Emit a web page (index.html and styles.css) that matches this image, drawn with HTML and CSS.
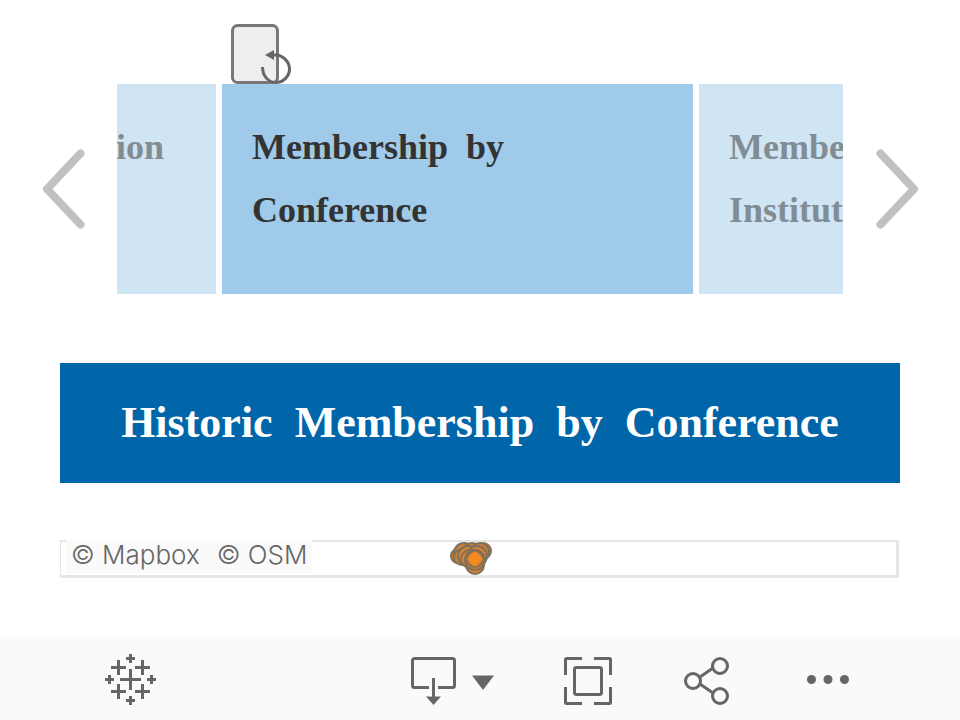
FILE: index.html
```html
<!DOCTYPE html>
<html lang="en">
<head>
  <meta charset="UTF-8">
  <meta name="viewport" content="width=device-width, initial-scale=1">
  <title>Historic Membership by Conference</title>
  <link rel="stylesheet" href="styles.css">
</head>
<body>
  <main class="story">
    <nav class="navigator" aria-label="Story points">
      <button class="arrow" type="button" aria-label="Previous">
        <svg width="54" height="84" viewBox="0 0 54 84" fill="none"><path d="M48.500 6.500L15 42L48.500 77.500"/></svg>
      </button>
      <div class="points">
        <button class="point point-prev" type="button">ion</button>
        <div class="current">
          <button class="point point-active" type="button">Membership  by
Conference</button>
          <button class="revert" type="button" aria-label="Revert">
            <svg width="62" height="60" viewBox="0 0 62 60" fill="none">
              <rect x="2.500" y="1.500" width="45" height="57" rx="5" fill="#eee" stroke="#777" stroke-width="3"/>
              <path d="M32.500 43c0 9 6 15.500 13.500 15.500S59.500 52 59.500 45S53 31 45.500 31H42" stroke="#666" stroke-width="3"/>
              <path d="M35 31l9-5v10z" fill="#666"/>
            </svg>
          </button>
        </div>
        <button class="point point-next" type="button">Membership  by
Institution</button>
      </div>
      <button class="arrow" type="button" aria-label="Next">
        <svg width="54" height="84" viewBox="0 0 54 84" fill="none"><path d="M5.500 6.500L39 42L5.500 77.500"/></svg>
      </button>
    </nav>

    <h1 class="title">Historic  Membership  by  Conference</h1>

    <section class="map" aria-label="Map">
      <div class="attribution"><a href="#mapbox">© Mapbox</a><a href="#osm">© OSM</a></div>
      <svg class="marks" width="46" height="34" viewBox="0 0 46 34">
        <g fill="#d9822f" stroke="#80705a" stroke-width="2">
          <circle cx="36" cy="10" r="8"/>
          <circle cx="11" cy="15" r="7"/>
          <circle cx="17" cy="12" r="10"/>
          <circle cx="25" cy="11" r="9"/>
          <circle cx="33" cy="11" r="9"/>
          <circle cx="15" cy="16" r="8"/>
          <circle cx="21" cy="15" r="10"/>
          <circle cx="30" cy="15" r="10"/>
          <circle cx="23" cy="18" r="9"/>
          <circle cx="28" cy="24" r="9"/>
          <circle cx="28" cy="19" r="10"/>
          <circle cx="28" cy="18" r="8"/>
        </g>
        <path d="M28 10l8 8l-8 8l-8-8z" fill="#f58a22"/>
      </svg>
    </section>
  </main>

  <footer class="toolbar">
    <a class="tool" href="#tableau" aria-label="View on Tableau Public">
      <svg width="51" height="51" viewBox="0 0 51 51" stroke="#666" stroke-width="3" fill="none">
        <path d="M25.500 15v21M15 25.500h21"/>
        <path d="M13.500 6v15M6 13.500h15M37.500 6v15M30 13.500h15M13.500 30v15M6 37.500h15M37.500 30v15M30 37.500h15"/>
        <path d="M25.500 0v9M21 4.500h9M25.500 42v9M21 46.500h9M4.500 21v9M0 25.500h9M46.500 21v9M42 25.500h9"/>
      </svg>
    </a>
    <button class="tool tool-download" type="button" aria-label="Download">
      <svg width="84" height="54" viewBox="0 -4 84 54" fill="none">
        <path d="M18 30.500H3.500a2 2 0 0 1-2-2v-25a2 2 0 0 1 2-2h38a2 2 0 0 1 2 2v25a2 2 0 0 1-2 2H27M22.500 21v20" stroke="#666" stroke-width="3"/>
        <path d="M15 39.500h15L22.500 48z" fill="#666"/>
        <path d="M61 18.500h22L72 33z" fill="#666"/>
      </svg>
    </button>
    <button class="tool" type="button" aria-label="Full screen">
      <svg width="48" height="51" viewBox="0 -3 48 51" fill="none" stroke="#666" stroke-width="3">
        <path d="M1.500 18V2.500a1 1 0 0 1 1-1H18M30 1.500h15.500a1 1 0 0 1 1 1V18M46.500 30v15.500a1 1 0 0 1-1 1H30M18 46.500H2.500a1 1 0 0 1-1-1V30"/>
        <rect x="10.500" y="10.500" width="27" height="27" rx="2"/>
      </svg>
    </button>
    <button class="tool" type="button" aria-label="Share">
      <svg width="48" height="51" viewBox="0 -3 48 51" fill="none" stroke="#666" stroke-width="3">
        <circle cx="9" cy="24" r="7.500"/>
        <circle cx="36" cy="9" r="7.500"/>
        <circle cx="36" cy="39" r="7.500"/>
        <path d="M16 20l13-9M16 27l13 9"/>
      </svg>
    </button>
    <button class="tool" type="button" aria-label="More">
      <svg width="42" height="9" viewBox="0 0 42 9" fill="#666">
        <circle cx="4.500" cy="4.500" r="4.500"/>
        <circle cx="21" cy="4.500" r="4.500"/>
        <circle cx="37.500" cy="4.500" r="4.500"/>
      </svg>
    </button>
  </footer>
</body>
</html>
```
FILE: styles.css
```css
* {
  box-sizing: border-box;
}

body {
  margin: 0;
  min-height: 100vh;
  display: flex;
  flex-direction: column;
  background: #fff;
  font-family: "Liberation Serif", "Times New Roman", serif;
}

button {
  margin: 0;
  padding: 0;
  border: none;
  background: none;
  font: inherit;
  cursor: pointer;
}

svg {
  display: block;
}

.story {
  flex: 1;
  padding-top: 84px;
}

/* Story navigator */
.navigator {
  display: flex;
  align-items: stretch;
  height: 210px;
}

.arrow {
  flex: 0 0 117px;
  display: flex;
  align-items: center;
  justify-content: center;
}

.arrow path {
  stroke: #c1c1c1;
  stroke-width: 8;
  stroke-linecap: round;
  stroke-linejoin: round;
}

.points {
  flex: 1;
  min-width: 0;
  display: flex;
  gap: 6px;
}

.point {
  display: flex;
  align-items: flex-start;
  padding: 32px 30px;
  overflow: hidden;
  background: #cfe5f3;
  color: #828c93;
  font-size: 36px;
  font-weight: bold;
  line-height: 63px;
  text-align: left;
  white-space: pre;
}

.point-prev {
  flex: 0 0 99px;
  justify-content: flex-end;
  padding: 32px 52px 32px 0;
}

.current {
  position: relative;
  flex: 0 0 471px;
  display: flex;
}

.point-active {
  flex: 1;
  background: #9fcae9;
  color: #333;
}

.point-next {
  flex: 1;
  min-width: 0;
}

.revert {
  position: absolute;
  left: 8px;
  bottom: 100%;
}

/* Dashboard */
.title {
  margin: 69px 60px 57px;
  background: #0065a9;
  color: #fff;
  font-size: 44px;
  line-height: 120px;
  text-align: center;
  white-space: pre;
}

.map {
  position: relative;
  display: flex;
  height: 38px;
  margin: 0 61px 0 60px;
  border: 1px solid #e6e6e6;
  border-width: 2px 3px 3px 1px;
}

.attribution {
  display: flex;
  gap: 17px;
  height: 33px;
  margin: -2px 0 0 5px;
  padding: 0 5px;
  background: #fafafa;
  font-family: Inter, sans-serif;
  font-size: 26px;
  font-weight: 300;
  line-height: 30px;
}

.attribution a {
  color: #666;
  text-decoration: none;
}

.marks {
  position: absolute;
  left: 49%;
  bottom: 0;
  transform: translateX(-50%);
}

/* Toolbar */
.toolbar {
  display: flex;
  align-items: center;
  height: 81px;
  padding: 0 72px 0 70px;
  background: #fafafa;
}

.tool {
  flex: 0 0 120px;
  display: flex;
  justify-content: center;
}

.tool-download {
  flex-basis: 150px;
  margin-left: auto;
}
```
